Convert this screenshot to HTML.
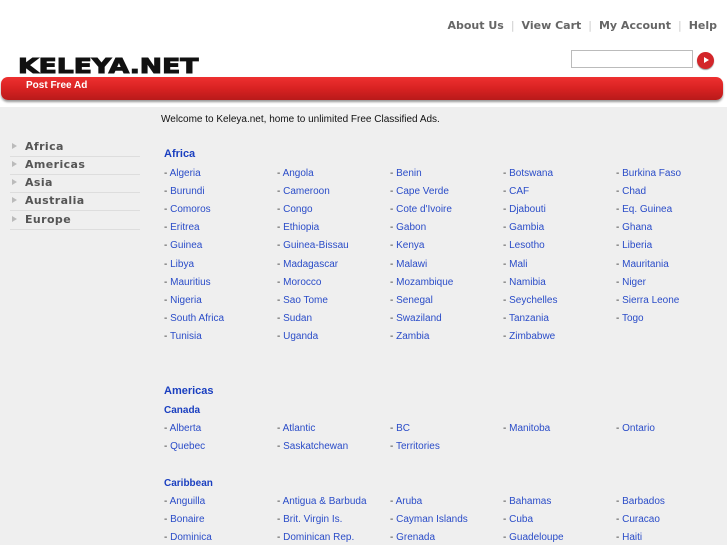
<!DOCTYPE html>
<html><head><meta charset="utf-8"><style>
*{margin:0;padding:0;box-sizing:border-box}
body{width:727px;height:545px;overflow:hidden;background:#efefef;font-family:"Liberation Sans",sans-serif;position:relative}
#top{position:absolute;left:0;top:0;width:727px;height:107px;background:#fff}
.nav{position:absolute;top:19px;right:10px;font-family:"DejaVu Sans",sans-serif;font-size:11px;font-weight:bold;color:#666;letter-spacing:0}
.nav span.sep{color:#ccc;font-weight:normal;margin:0 7px}
.logo{position:absolute;left:18px;top:56px;font-family:"DejaVu Sans",sans-serif;font-weight:900;font-size:20px;color:#111;transform:scaleX(1.33);transform-origin:left;line-height:20px;-webkit-text-stroke:1px #111}
.search{position:absolute;left:571px;top:50px;width:122px;height:18px;border:1px solid #bbb;background:#fff}
.go{position:absolute;left:697px;top:52px;width:17px;height:17px;border-radius:50%;background:#d3262a;box-shadow:0 1px 1px #999}
.go:after{content:"";position:absolute;left:7px;top:5px;border-left:5px solid #fff;border-top:3.5px solid transparent;border-bottom:3.5px solid transparent}
.bar{position:absolute;left:1px;top:77px;width:722px;height:23px;border-radius:7px;background:linear-gradient(#ee3030,#d82222 50%,#b81a1a);box-shadow:0 2px 2px #999}
.bar span{position:absolute;left:25px;top:3px;color:#fff;font-size:10px;font-weight:bold}
.welcome{position:absolute;left:161px;top:114px;font-size:10px;color:#111}
.side{position:absolute;left:10px;width:130px;font-family:"DejaVu Sans",sans-serif;font-size:11px;font-weight:bold;color:#555;letter-spacing:.4px;border-bottom:1px solid #ddd;height:18px;padding-left:15px;line-height:16px}
.side:before{content:"";position:absolute;left:2px;top:4px;border-left:5px solid #bbb;border-top:3.5px solid transparent;border-bottom:3.5px solid transparent}
.h{position:absolute;left:164px;color:#1a3fc0;font-weight:bold;font-size:11px}
.h2{position:absolute;left:164px;color:#1a3fc0;font-weight:bold;font-size:10px}
.r{position:absolute;left:164px;font-size:10px;color:#333;white-space:nowrap;line-height:12px}
.r span{display:inline-block;width:113px}
.r a{color:#2a4cc8;text-decoration:none}
</style></head><body>
<div id="top">
<div class="nav">About Us<span class="sep">|</span>View Cart<span class="sep">|</span>My Account<span class="sep">|</span>Help</div>
<div class="logo">KELEYA.NET</div>
<div class="search"></div><div class="go"></div>
<div class="bar"><span>Post Free Ad</span></div>
</div>
<div class="welcome">Welcome to Keleya.net, home to unlimited Free Classified Ads.</div>
<div class="side" style="top:139px">Africa</div>
<div class="side" style="top:157px">Americas</div>
<div class="side" style="top:175px">Asia</div>
<div class="side" style="top:193px">Australia</div>
<div class="side" style="top:212px">Europe</div>
<div class="h" style="top:148px">Africa</div>
<div class="r" style="top:168px"><span>- <a>Algeria</a></span><span>- <a>Angola</a></span><span>- <a>Benin</a></span><span>- <a>Botswana</a></span><span>- <a>Burkina Faso</a></span></div>
<div class="r" style="top:186px"><span>- <a>Burundi</a></span><span>- <a>Cameroon</a></span><span>- <a>Cape Verde</a></span><span>- <a>CAF</a></span><span>- <a>Chad</a></span></div>
<div class="r" style="top:204px"><span>- <a>Comoros</a></span><span>- <a>Congo</a></span><span>- <a>Cote d'Ivoire</a></span><span>- <a>Djabouti</a></span><span>- <a>Eq. Guinea</a></span></div>
<div class="r" style="top:222px"><span>- <a>Eritrea</a></span><span>- <a>Ethiopia</a></span><span>- <a>Gabon</a></span><span>- <a>Gambia</a></span><span>- <a>Ghana</a></span></div>
<div class="r" style="top:240px"><span>- <a>Guinea</a></span><span>- <a>Guinea-Bissau</a></span><span>- <a>Kenya</a></span><span>- <a>Lesotho</a></span><span>- <a>Liberia</a></span></div>
<div class="r" style="top:259px"><span>- <a>Libya</a></span><span>- <a>Madagascar</a></span><span>- <a>Malawi</a></span><span>- <a>Mali</a></span><span>- <a>Mauritania</a></span></div>
<div class="r" style="top:277px"><span>- <a>Mauritius</a></span><span>- <a>Morocco</a></span><span>- <a>Mozambique</a></span><span>- <a>Namibia</a></span><span>- <a>Niger</a></span></div>
<div class="r" style="top:295px"><span>- <a>Nigeria</a></span><span>- <a>Sao Tome</a></span><span>- <a>Senegal</a></span><span>- <a>Seychelles</a></span><span>- <a>Sierra Leone</a></span></div>
<div class="r" style="top:313px"><span>- <a>South Africa</a></span><span>- <a>Sudan</a></span><span>- <a>Swaziland</a></span><span>- <a>Tanzania</a></span><span>- <a>Togo</a></span></div>
<div class="r" style="top:331px"><span>- <a>Tunisia</a></span><span>- <a>Uganda</a></span><span>- <a>Zambia</a></span><span>- <a>Zimbabwe</a></span></div>
<div class="h" style="top:385px">Americas</div>
<div class="h2" style="top:405px">Canada</div>
<div class="r" style="top:423px"><span>- <a>Alberta</a></span><span>- <a>Atlantic</a></span><span>- <a>BC</a></span><span>- <a>Manitoba</a></span><span>- <a>Ontario</a></span></div>
<div class="r" style="top:441px"><span>- <a>Quebec</a></span><span>- <a>Saskatchewan</a></span><span>- <a>Territories</a></span></div>
<div class="h2" style="top:478px">Caribbean</div>
<div class="r" style="top:496px"><span>- <a>Anguilla</a></span><span>- <a>Antigua &amp; Barbuda</a></span><span>- <a>Aruba</a></span><span>- <a>Bahamas</a></span><span>- <a>Barbados</a></span></div>
<div class="r" style="top:514px"><span>- <a>Bonaire</a></span><span>- <a>Brit. Virgin Is.</a></span><span>- <a>Cayman Islands</a></span><span>- <a>Cuba</a></span><span>- <a>Curacao</a></span></div>
<div class="r" style="top:532px"><span>- <a>Dominica</a></span><span>- <a>Dominican Rep.</a></span><span>- <a>Grenada</a></span><span>- <a>Guadeloupe</a></span><span>- <a>Haiti</a></span></div>
</body></html>
